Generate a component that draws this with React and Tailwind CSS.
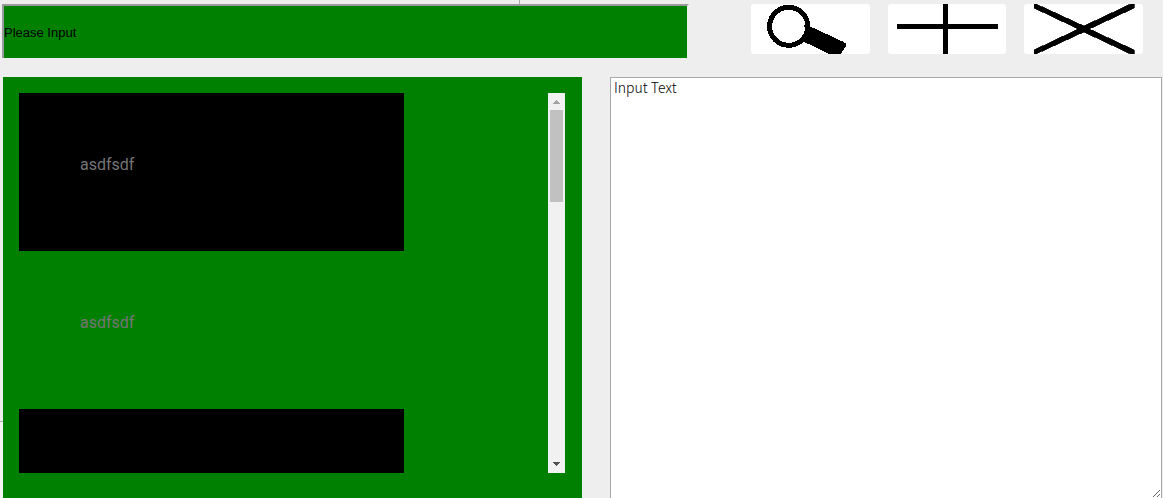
import { useRef, useState } from "react";

const ITEMS = Array.from({ length: 9 }, () => "asdfsdf");

function IconButton({ label, children }) {
  return (
    <button
      type="button"
      aria-label={label}
      className="h-[50px] min-w-0 flex-1 overflow-hidden rounded-[3px] bg-white"
    >
      <svg
        viewBox="0 0 118 50"
        preserveAspectRatio="none"
        shapeRendering="crispEdges"
        className="block h-full w-full"
        aria-hidden="true"
      >
        {children}
      </svg>
    </button>
  );
}

function ScrollList() {
  const listRef = useRef(null);
  const [progress, setProgress] = useState(0);

  const onScroll = (e) => {
    const el = e.currentTarget;
    setProgress(el.scrollTop / Math.max(1, el.scrollHeight - el.clientHeight));
  };
  const step = (dy) => listRef.current.scrollBy({ top: dy });

  return (
    <div className="flex min-h-0 flex-1">
      <ul
        ref={listRef}
        onScroll={onScroll}
        className="min-w-0 flex-1 overflow-y-auto [scrollbar-width:none]"
      >
        {ITEMS.map((text, i) => (
          <li
            key={i}
            className="h-[158px] w-[385px] max-w-full px-[61px] pt-[60px] font-[Roboto,sans-serif] text-base leading-6 text-[#757575] odd:bg-black"
          >
            {text}
          </li>
        ))}
      </ul>
      <div className="flex w-[17px] flex-col bg-[#f1f1f1]">
        <button
          type="button"
          aria-label="Scroll up"
          onClick={() => step(-40)}
          className="h-[17px] shrink-0"
        >
          <svg viewBox="0 0 17 17" shapeRendering="crispEdges" className="block h-full w-full">
            <path d="M8 7h1v1h1v1h1v1h1v1H5v-1h1V9h1V8h1z" fill="#a3a3a3" />
          </svg>
        </button>
        <div className="flex min-h-0 flex-1 flex-col px-[2px]">
          <div style={{ flexGrow: progress }} />
          <div className="h-[92px] shrink-0 bg-[#c1c1c1]" />
          <div style={{ flexGrow: 1 - progress }} />
        </div>
        <button
          type="button"
          aria-label="Scroll down"
          onClick={() => step(40)}
          className="h-[17px] shrink-0"
        >
          <svg viewBox="0 0 17 17" shapeRendering="crispEdges" className="block h-full w-full">
            <path d="M5 6h7v1h-1v1h-1v1H9v1H8V9H7V8H6V7H5z" fill="#505050" />
          </svg>
        </button>
      </div>
    </div>
  );
}

export default function App() {
  return (
    <div className="flex h-screen flex-col overflow-hidden bg-[#eee]">
      <div className="flex h-1 shrink-0">
        <div className="flex-[519]" />
        <div className="flex-[644] border-l border-[#a9a9a9]" />
      </div>
      <header className="grid shrink-0 grid-cols-[minmax(0,687fr)_minmax(0,392fr)] gap-[62px] pr-5 pl-[2px]">
        <input
          type="text"
          aria-label="Please Input"
          placeholder="Please Input"
          className="h-[54px] w-full border-t-2 border-r-2 border-l-2 border-[#9a9a9a] border-r-[#eee] bg-[#008000] font-['Liberation_Sans',Arial,sans-serif] text-[13px] text-black outline-none placeholder:text-black"
        />
        <div className="flex gap-[18px]">
          <IconButton label="Search">
            <circle cx="37.5" cy="22.3" r="19" fill="none" stroke="#000" strokeWidth="5" />
            <path
              d="M52.5 21H55L59 22.5 91.5 37.7 94 39.3V42.7L90 49 88 50H77.5L52.5 37.7 54 35V24L52.5 23z"
              fill="#000"
            />
          </IconButton>
          <IconButton label="Add">
            <path d="M9 20h46V0h5v20h49v5H60v25h-5V25H9z" fill="#000" />
          </IconButton>
          <IconButton label="Delete">
            <path
              d="M10 0H12L59.5 22 106 0H109.5V4L65 25 109.5 46V50H106L59.5 28 12 50H10V46L54 25 10 4z"
              fill="#000"
              stroke="#000"
              strokeWidth="0.7"
            />
          </IconButton>
        </div>
      </header>
      <main className="mt-[19px] flex min-h-0 flex-1 pr-px">
        <div className="flex w-[3px] shrink-0 flex-col">
          <div className="flex-[345] border-b border-[#a9a9a9]" />
          <div className="flex-[76] bg-[#f4f4f4]" />
        </div>
        <div className="grid min-w-0 flex-1 grid-cols-[minmax(0,579fr)_minmax(0,552fr)] grid-rows-[minmax(0,1fr)] gap-7">
          <section className="flex flex-col bg-[#008000] pt-4 pr-[17px] pb-[25px] pl-4">
            <ScrollList />
          </section>
          <textarea
            aria-label="Input Text"
            defaultValue="Input Text"
            className="w-full border border-b-0 border-[#a9a9a9] bg-white px-[3px] font-['Noto_Sans_CJK_JP',sans-serif] text-[14px] leading-[18px] font-light text-black outline-none"
          />
        </div>
      </main>
    </div>
  );
}
